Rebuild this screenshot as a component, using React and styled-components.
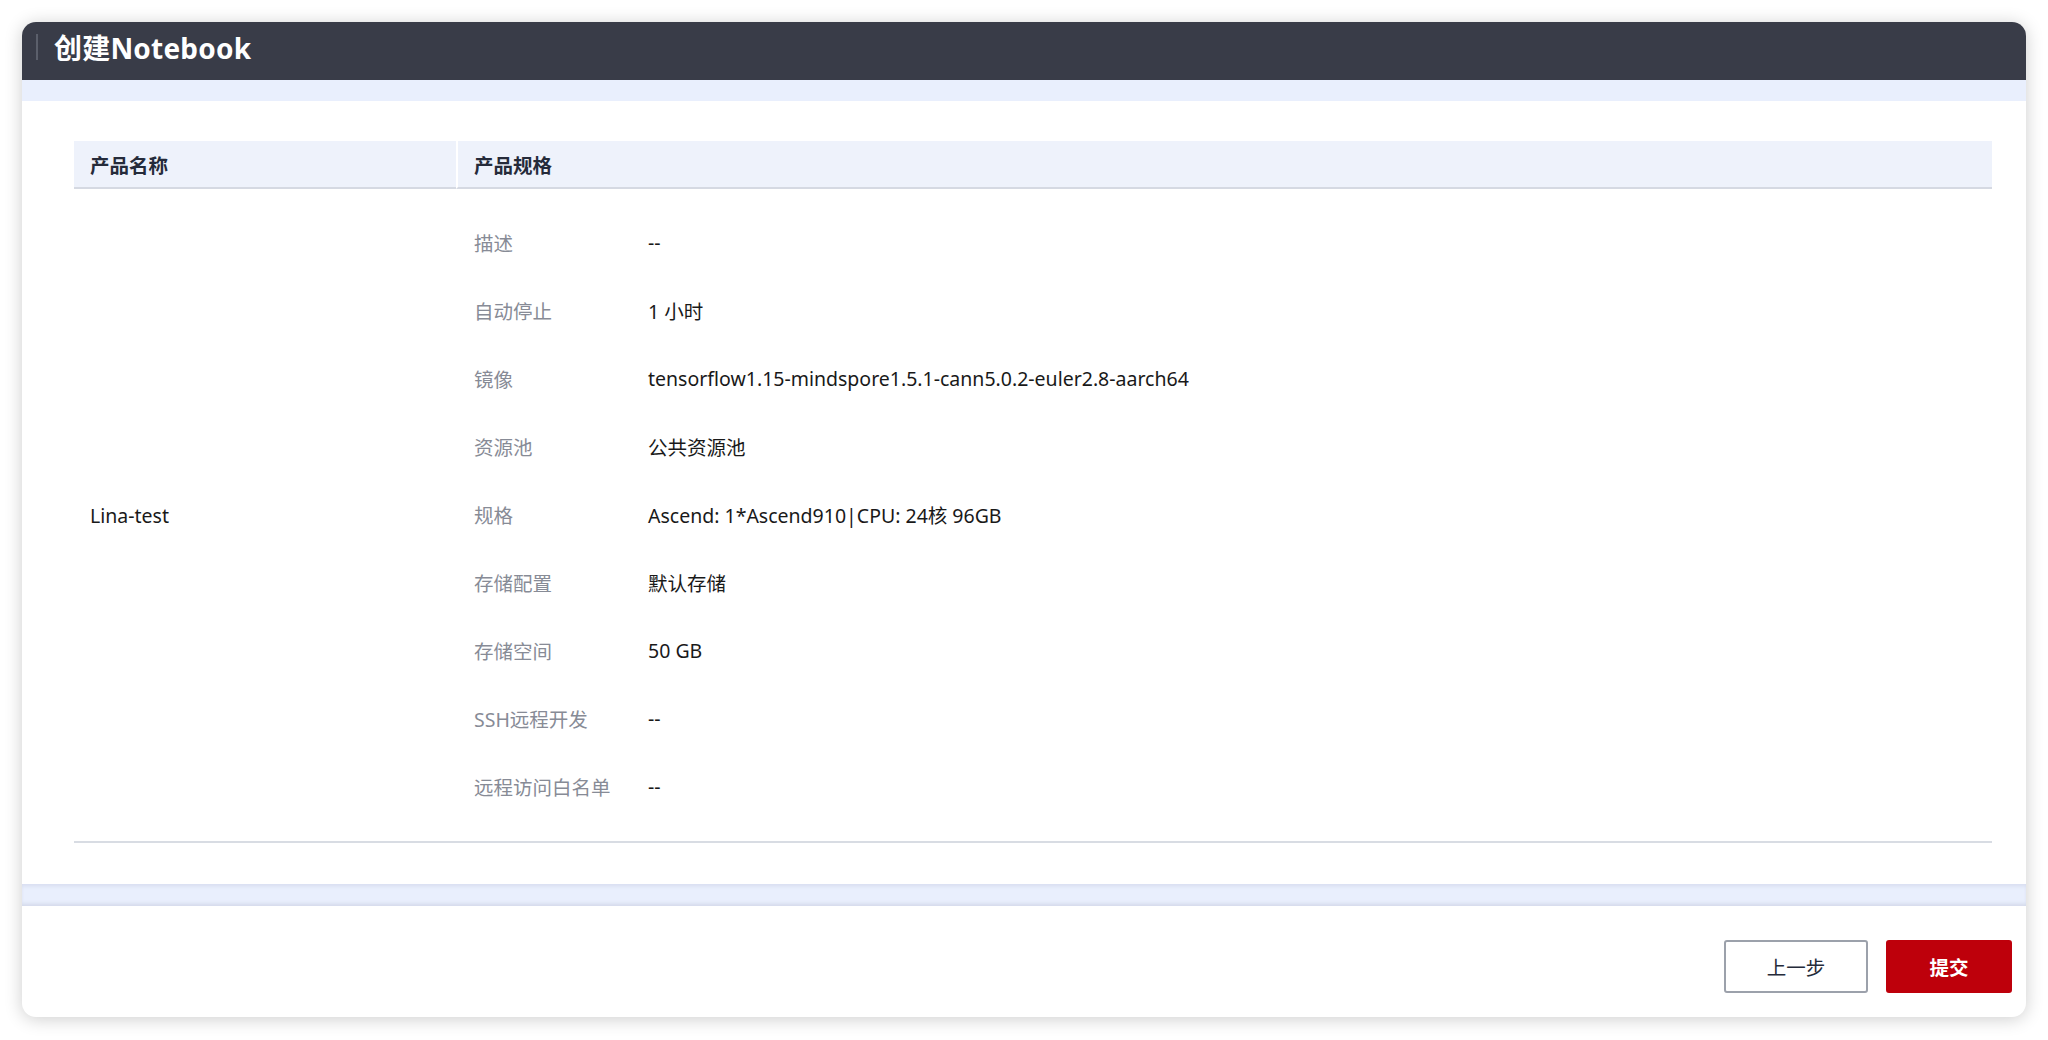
import React from 'react';
import styled, { createGlobalStyle } from 'styled-components';

const GlobalStyle = createGlobalStyle`
  html, body {
    margin: 0;
    padding: 0;
    background: #ffffff;
  }
  body {
    font-family: 'Noto Sans', 'Noto Sans CJK SC', sans-serif;
    color: #191919;
  }
`;

const Page = styled.div`
  padding: 22px;
  box-sizing: border-box;
  width: 2048px;
  height: 1040px;
`;

const Dialog = styled.section`
  background: #ffffff;
  border-radius: 14px;
  box-shadow: 0 2px 18px rgba(0, 0, 0, 0.2);
  overflow: hidden;
  display: flex;
  flex-direction: column;
`;

const Header = styled.header`
  height: 58px;
  background: #393c48;
  display: flex;
  align-items: center;
  padding-left: 14px;
  padding-bottom: 8px;
  box-sizing: border-box;
`;

const TitleBar = styled.span`
  width: 2px;
  height: 26px;
  background: #5b5f6b;
  margin-right: 16px;
`;

const Title = styled.h1`
  margin: 0;
  font-size: 28px;
  font-weight: 700;
  color: #ffffff;
  letter-spacing: 0.2px;
`;

const Strip = styled.div`
  height: ${props => props.height}px;
  background: #e9effd;
  box-shadow: ${props =>
    props.inset ? 'inset 0 4px 4px -2px #d6dcef, inset 0 -4px 4px -2px #d2d7e8' : 'none'};
`;

const Content = styled.div`
  padding: 40px 34px 41px 52px;
`;

const Table = styled.div`
  display: grid;
  grid-template-columns: 382px 1fr;
  border-bottom: 2px solid #d8dce3;
`;

const HeadCell = styled.div`
  height: 46px;
  background: #eef2fb;
  border-bottom: 2px solid #d5d9e2;
  border-left: ${props => (props.divider ? '2px solid #ffffff' : 'none')};
  display: flex;
  align-items: center;
  padding-left: 16px;
  font-size: 19.5px;
  font-weight: 700;
  color: #252b3a;
`;

const NameCell = styled.div`
  display: flex;
  align-items: center;
  padding-left: 16px;
  font-size: 19.5px;
  color: #191919;
`;

const SpecList = styled.dl`
  margin: 0;
  padding: 19px 0 21px 18px;
  display: grid;
  grid-template-columns: 174px 1fr;
  grid-auto-rows: 68px;
  align-items: center;
`;

const SpecLabel = styled.dt`
  font-size: 19.5px;
  color: #878b96;
`;

const SpecValue = styled.dd`
  margin: 0;
  font-size: 19.5px;
  color: #191919;
`;

const Footer = styled.footer`
  display: flex;
  justify-content: flex-end;
  gap: 18px;
  padding: 34px 14px 24px;
`;

const Button = styled.button`
  height: 53px;
  width: ${props => (props.primary ? '126px' : '144px')};
  border-radius: 3px;
  font-family: 'Noto Sans', 'Noto Sans CJK SC', sans-serif;
  font-size: 19.5px;
  font-weight: ${props => (props.primary ? 700 : 400)};
  cursor: pointer;
  background: ${props => (props.primary ? '#be000b' : '#ffffff')};
  color: ${props => (props.primary ? '#ffffff' : '#252b3a')};
  border: 2px solid ${props => (props.primary ? '#be000b' : '#9ca1ab')};
`;

const specs = [
  ['描述', '--'],
  ['自动停止', '1 小时'],
  ['镜像', 'tensorflow1.15-mindspore1.5.1-cann5.0.2-euler2.8-aarch64'],
  ['资源池', '公共资源池'],
  ['规格', 'Ascend: 1*Ascend910|CPU: 24核 96GB'],
  ['存储配置', '默认存储'],
  ['存储空间', '50 GB'],
  ['SSH远程开发', '--'],
  ['远程访问白名单', '--'],
];

export default function App() {
  return (
    <Page>
      <GlobalStyle />
      <Dialog>
        <Header>
          <TitleBar />
          <Title>创建Notebook</Title>
        </Header>
        <Strip height={21} />
        <Content>
          <Table>
            <HeadCell>产品名称</HeadCell>
            <HeadCell divider>产品规格</HeadCell>
            <NameCell>Lina-test</NameCell>
            <SpecList>
              {specs.map(([label, value]) => (
                <React.Fragment key={label}>
                  <SpecLabel>{label}</SpecLabel>
                  <SpecValue>{value}</SpecValue>
                </React.Fragment>
              ))}
            </SpecList>
          </Table>
        </Content>
        <Strip height={22} inset />
        <Footer>
          <Button>上一步</Button>
          <Button primary>提交</Button>
        </Footer>
      </Dialog>
    </Page>
  );
}
